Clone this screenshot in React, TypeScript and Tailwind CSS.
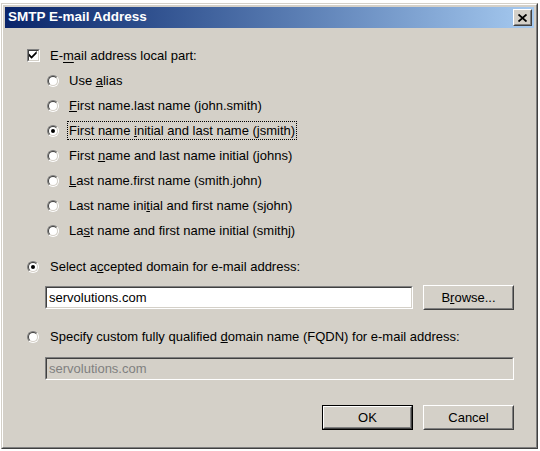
import React from "react";

const FONT = { fontFamily: '"Liberation Sans", Arial, sans-serif' };

const Radio = ({ checked = false }: { checked?: boolean }) => (
    <span className="flex w-[12px] h-[12px] shrink-0 rounded-full border border-t-[#808080] border-l-[#808080] border-b-white border-r-white">
        <span className="flex flex-1 items-center justify-center rounded-full border border-t-[#404040] border-l-[#404040] border-b-[#d4d0c8] border-r-[#d4d0c8] bg-white">
            {checked && <span className="w-[4px] h-[4px] rounded-full bg-black" />}
        </span>
    </span>
);

const Check = () => (
    <span className="flex w-[13px] h-[13px] shrink-0 border border-t-[#808080] border-l-[#808080] border-b-white border-r-white">
        <span className="flex flex-1 items-center justify-center border border-t-[#404040] border-l-[#404040] border-b-[#d4d0c8] border-r-[#d4d0c8] bg-white">
            <svg width="9" height="9" viewBox="0 0 7 7">
                <path d="M0 2 L2 4 L6 0 V2 L2 6 L0 4 Z" fill="#000" />
            </svg>
        </span>
    </span>
);

const Button = ({ children, def = false }: { children: React.ReactNode; def?: boolean }) => (
    <div className={`flex w-[91px] h-[25px] ${def ? "border border-black" : ""}`}>
        <div className="flex flex-1 border border-t-white border-l-white border-b-[#404040] border-r-[#404040]">
            <div className="flex flex-1 items-center justify-center border border-transparent border-b-[#808080] border-r-[#808080] text-[13px] text-black">
                {children}
            </div>
        </div>
    </div>
);

const Sunken = ({ children, disabled = false, className = "" }: { children: React.ReactNode; disabled?: boolean; className?: string }) => (
    <div className={`flex h-[23px] border border-t-[#808080] border-l-[#808080] border-b-white border-r-white ${className}`}>
        <div className={`flex flex-1 items-center pl-[2px] border border-t-[#404040] border-l-[#404040] border-b-[#d4d0c8] border-r-[#d4d0c8] text-[13px] ${disabled ? "bg-[#d4d0c8] text-[#808080]" : "bg-white text-black"}`}>
            {children}
        </div>
    </div>
);

const Row = ({ children, checked, focus }: { children: React.ReactNode; checked?: boolean; focus?: boolean }) => (
    <div className="flex h-[25px] items-center pl-[42px]">
        <Radio checked={checked} />
        <span className={`ml-[8px] px-[1px] leading-[17px] ${focus ? "border border-dotted border-black" : "border border-transparent"}`}>{children}</span>
    </div>
);

export default function App() {
    return (
        <div className="w-[540px] h-[451px] bg-white pt-[3px] pl-[1px]" style={FONT}>
            <div className="flex w-[537px] h-[446px] border border-t-[#d4d0c8] border-l-[#d4d0c8] border-b-[#404040] border-r-[#404040]">
                <div className="flex flex-1 flex-col border border-t-white border-l-white border-b-[#808080] border-r-[#808080] bg-[#d4d0c8] p-[2px]">
                    {/* title bar */}
                    <div className="flex h-[21px] items-center justify-between bg-linear-to-r from-[#0a246a] to-[#a6caf0] pl-[3px] pr-[2px]">
                        <span className="text-[13.5px] font-bold text-white">SMTP E-mail Address</span>
                        <div className="flex w-[19px] h-[17px] border border-t-white border-l-white border-b-[#404040] border-r-[#404040] bg-[#d4d0c8]">
                            <div className="flex flex-1 items-center justify-center border border-transparent border-b-[#808080] border-r-[#808080]">
                                <svg width="9" height="8" viewBox="0 0 9 8">
                                    <path d="M0.5 0.5 L8.5 7.5 M8.5 0.5 L0.5 7.5" stroke="#000" strokeWidth="1.8" />
                                </svg>
                            </div>
                        </div>
                    </div>

                    {/* client */}
                    <div className="flex flex-col pt-[15px] pr-[20px] text-[13px] text-black">
                        <div className="flex h-[25px] items-center pl-[22px]">
                            <Check />
                            <span className="ml-[10px]">E-<u className="underline-offset-2">m</u>ail address local part:</span>
                        </div>
                        <Row>Use <u>a</u>lias</Row>
                        <Row><u>F</u>irst name.last name (john.smith)</Row>
                        <Row checked focus>First name <u>i</u>nitial and last name (jsmith)</Row>
                        <Row>First <u>n</u>ame and last name initial (johns)</Row>
                        <Row><u>L</u>ast name.first name (smith.john)</Row>
                        <Row>Last name ini<u>t</u>ial and first name (sjohn)</Row>
                        <Row>La<u>s</u>t name and first name initial (smithj)</Row>

                        <div className="mt-[11px] flex h-[25px] items-center pl-[22px]">
                            <Radio checked />
                            <span className="ml-[11px]">Select a<u>c</u>cepted domain for e-mail address:</span>
                        </div>
                        <div className="mt-[6px] flex h-[25px] items-center gap-[10px] pl-[40px]">
                            <Sunken className="flex-1">servolutions.com</Sunken>
                            <Button>B<u>r</u>owse...</Button>
                        </div>

                        <div className="mt-[14px] flex h-[25px] items-center pl-[22px]">
                            <Radio />
                            <span className="ml-[11px]">Specify custom fully qualified <u>d</u>omain name (FQDN) for e-mail address:</span>
                        </div>
                        <div className="mt-[8px] pl-[40px]">
                            <Sunken disabled>servolutions.com</Sunken>
                        </div>

                        <div className="mt-[25px] flex justify-end gap-[10px]">
                            <Button def>OK</Button>
                            <Button>Cancel</Button>
                        </div>
                    </div>
                </div>
            </div>
        </div>
    );
}
